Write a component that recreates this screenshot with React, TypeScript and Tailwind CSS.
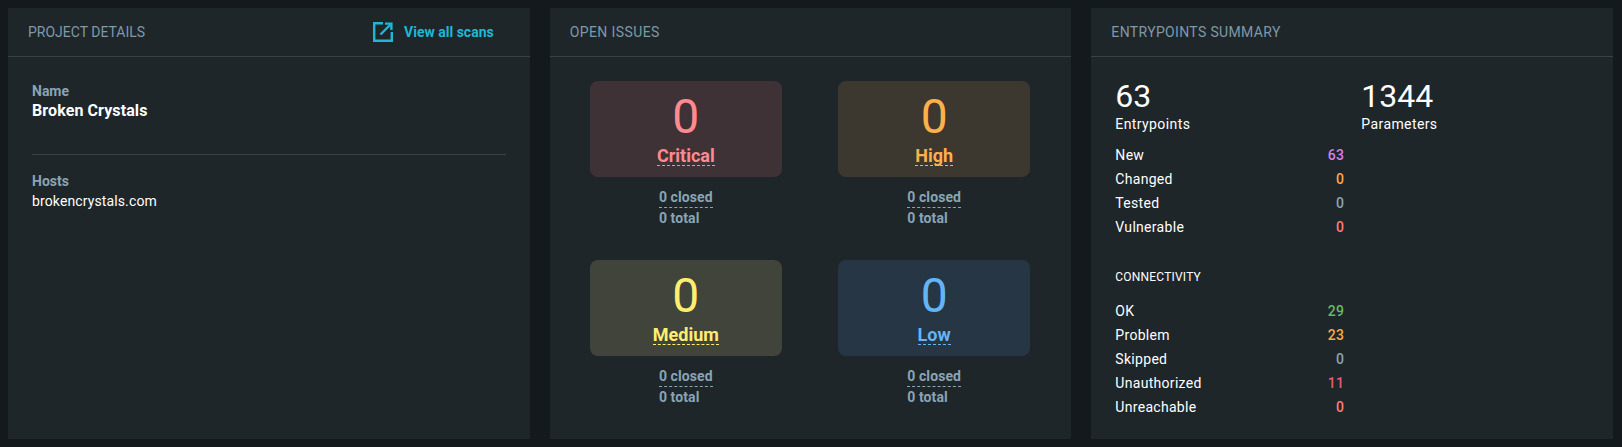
type Severity = {
  label: string;
  card: string;
  text: string;
  line: string;
};

const severities: Severity[] = [
  { label: "Critical", card: "bg-[#3f3236]", text: "text-[#ff8a8f]", line: "border-[#ff8a8f]" },
  { label: "High", card: "bg-[#3c382f]", text: "text-[#ffb04c]", line: "border-[#ffb04c]" },
  { label: "Medium", card: "bg-[#40443b]", text: "text-[#ffee70]", line: "border-[#ffee70]" },
  { label: "Low", card: "bg-[#273644]", text: "text-[#64b5f6]", line: "border-[#64b5f6]" },
];

const entrypointRows = [
  { label: "New", value: "63", color: "text-[#d17ff5]" },
  { label: "Changed", value: "0", color: "text-[#ffa940]" },
  { label: "Tested", value: "0", color: "text-[#8aa4b4]" },
  { label: "Vulnerable", value: "0", color: "text-[#ff7b7b]" },
];

const connectivityRows = [
  { label: "OK", value: "29", color: "text-[#66bb6a]" },
  { label: "Problem", value: "23", color: "text-[#ffa940]" },
  { label: "Skipped", value: "0", color: "text-[#8aa4b4]" },
  { label: "Unauthorized", value: "11", color: "text-[#ec5a72]" },
  { label: "Unreachable", value: "0", color: "text-[#ff7b7b]" },
];

function PanelHeader({
  title,
  titleClass = "",
  children,
}: {
  title: string;
  titleClass?: string;
  children?: React.ReactNode;
}) {
  return (
    <div className="flex h-[49px] items-center justify-between border-b border-[#3a4245] pl-5 pr-[36px]">
      <h2 className={`text-[14px] font-normal text-[#7f99a8] ${titleClass}`}>{title}</h2>
      {children}
    </div>
  );
}

function SeverityCard({ label, card, text, line }: Severity) {
  return (
    <div className="flex flex-col items-center">
      <div className={`flex h-[96px] w-[192px] flex-col items-center rounded-lg pt-3 ${card} ${text}`}>
        <span className="text-[48px] font-normal leading-[48px]">0</span>
        <span className={`mt-[5px] border-b border-dashed text-[18px] font-bold leading-[19px] ${line}`}>
          {label}
        </span>
      </div>
      <div className="mt-[10px] text-[14px] font-bold leading-5 tracking-[0.1px] text-[#8aa4b4]">
        <div className="border-b border-dashed border-[#8aa4b4]">0 closed</div>
        <div>0 total</div>
      </div>
    </div>
  );
}

function StatRow({ label, value, color }: { label: string; value: string; color: string }) {
  return (
    <div className="flex h-6 items-center justify-between text-[14px] tracking-[0.3px] text-white">
      <span>{label}</span>
      <span className={`font-medium ${color}`}>{value}</span>
    </div>
  );
}

export default function App() {
  return (
    <div
      className="flex h-[447px] gap-5 bg-[#13191c] pb-2 pl-2 pr-[9px] pt-2 text-white"
      style={{ fontFamily: "Roboto, 'Liberation Sans', sans-serif" }}
    >
      <section className="h-[431px] flex-1 bg-[#1e262a]">
        <PanelHeader title="PROJECT DETAILS">
          <a className="flex items-center gap-[11px] text-[14px] font-bold text-[#1fb8d4]">
            <svg viewBox="0 0 20 20" className="h-5 w-5" fill="none" stroke="currentColor" strokeWidth="2.4">
              <path d="M10 1.2H1.2v17.6h17.6V10" />
              <path d="M7.5 12.5 18 2" />
              <path d="M12 1.6h6.4V8" />
            </svg>
            View all scans
          </a>
        </PanelHeader>
        <div className="px-6 pt-6">
          <div className="text-[14px] font-bold leading-5 text-[#8aa4b4]">Name</div>
          <div className="text-[16px] font-bold leading-5 tracking-[0.1px] text-white">Broken Crystals</div>
          <div className="mt-[33px] border-t border-[#3a4245]" />
          <div className="mt-[16px] text-[14px] font-bold leading-5 text-[#8aa4b4]">Hosts</div>
          <div className="text-[14px] leading-5 tracking-[0.12px] text-white">brokencrystals.com</div>
        </div>
      </section>

      <section className="h-[431px] flex-1 bg-[#1e262a]">
        <PanelHeader title="OPEN ISSUES" titleClass="tracking-[0.4px]" />
        <div className="grid grid-cols-2 gap-y-8 pl-3 pr-[13px] pt-6">
          {severities.map((s) => (
            <SeverityCard key={s.label} {...s} />
          ))}
        </div>
      </section>

      <section className="h-[431px] flex-1 bg-[#1e262a]">
        <PanelHeader title="ENTRYPOINTS SUMMARY" titleClass="tracking-[0.35px]" />
        <div className="flex gap-[17px] pl-6 pt-[21px]">
          <div className="w-[229px]">
            <div className="text-[32px] font-normal leading-9">63</div>
            <div className="text-[14px] leading-5 tracking-[0.4px]">Entrypoints</div>
            <div className="mt-[9px]">
              {entrypointRows.map((r) => (
                <StatRow key={r.label} {...r} />
              ))}
            </div>
            <div className="mt-[30px] text-[12px] leading-4 tracking-[0.2px]">CONNECTIVITY</div>
            <div className="mt-[14px]">
              {connectivityRows.map((r) => (
                <StatRow key={r.label} {...r} />
              ))}
            </div>
          </div>
          <div>
            <div className="text-[32px] font-normal leading-9">1344</div>
            <div className="text-[14px] leading-5 tracking-[0.4px]">Parameters</div>
          </div>
        </div>
      </section>
    </div>
  );
}
